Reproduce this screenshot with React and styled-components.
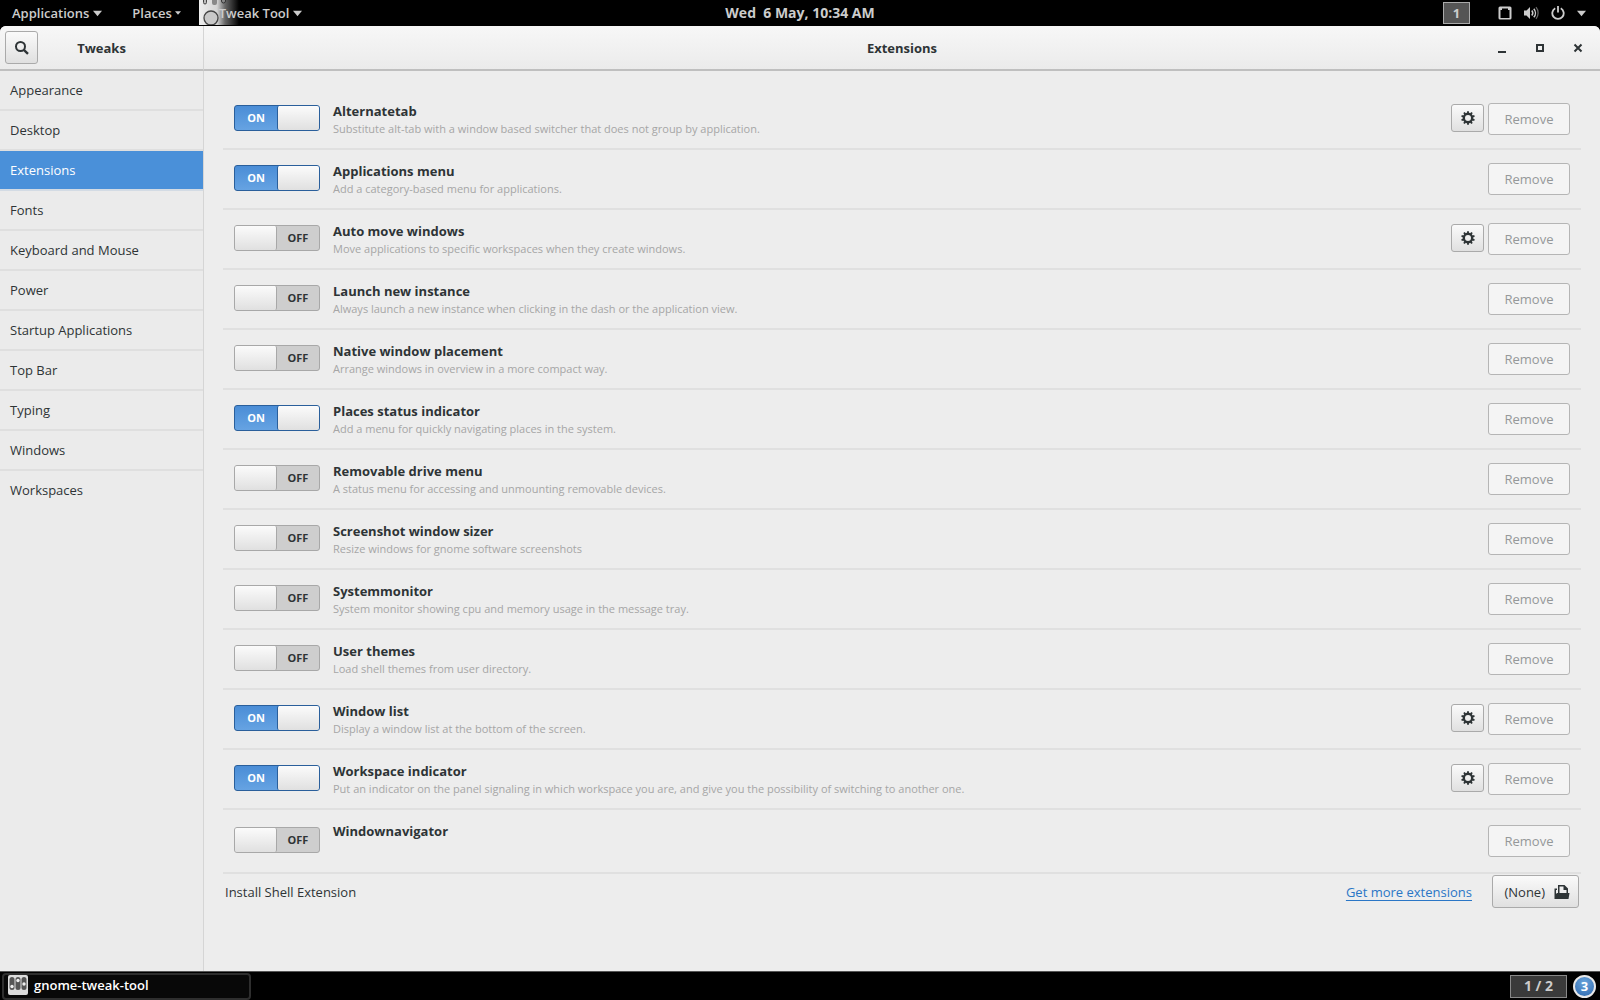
import React, { useState } from "react";
import styled, { createGlobalStyle, css } from "styled-components";

const Global = createGlobalStyle`
  * { box-sizing: border-box; }
  body { margin: 0; background: #000; }
  body, button, input { font-family: "Open Sans", "Noto Sans", sans-serif; font-size: 13px; }
`;

const Screen = styled.div`
  display: flex;
  flex-direction: column;
  min-height: 100vh;
  color: #2e3436;
  line-height: 18px;
`;

/* ---------- top panel ---------- */
const Panel = styled.header`
  display: grid;
  grid-template-columns: 1fr auto 1fr;
  align-items: center;
  height: 26px;
  background: #000;
  color: #ccc;
  font-weight: 700;
`;
const PanelSide = styled.div`
  display: flex;
  align-items: center;
  height: 26px;
  justify-content: ${(p) => (p.$end ? "flex-end" : "flex-start")};
`;
const PanelButton = styled.button`
  display: flex;
  align-items: center;
  gap: ${(p) => p.$gap || 4}px;
  height: 26px;
  padding: 0 ${(p) => p.$pad || 12}px;
  border: 0;
  background: none;
  color: inherit;
  font-weight: 600;
`;
const AppMenuButton = styled(PanelButton)`
  padding: 0 0 0 20px;
  position: relative;
  svg:first-child { position: absolute; left: 0; top: 0; }
  span { position: relative; }
`;
const Clock = styled.time`
  white-space: pre;
  font-size: 14px;
`;
const WorkspaceButton = styled.button`
  width: 27px;
  height: 22px;
  margin-right: 20px;
  padding: 0;
  border: 1px solid #aaa;
  background: #555;
  color: #ccc;
  font-weight: 700;
`;
const StatusButton = styled.button`
  display: flex;
  align-items: center;
  gap: 12px;
  height: 26px;
  padding: 0 14px 0 8px;
  border: 0;
  background: none;
  color: #ccc;
`;

/* ---------- window ---------- */
const Window = styled.main`
  flex: 1;
  display: grid;
  grid-template-columns: 204px 1fr;
  grid-template-rows: 45px 1fr;
  background: #ededed;
  border-radius: 6px 6px 0 0;
  overflow: hidden;
`;
const HeaderPart = styled.div`
  display: grid;
  grid-template-columns: 1fr auto 1fr;
  align-items: center;
  padding: 0 ${(p) => (p.$side ? 5 : 14)}px;
  background: linear-gradient(#f7f7f7, #ebebeb);
  border-bottom: 2px solid #bfbfbf;
  border-right: ${(p) => (p.$side ? "1px solid #d5d5d5" : "0")};
`;
const Title = styled.h1`
  grid-column: 2;
  margin: 0;
  font-size: 13px;
  font-weight: 700;
`;
const raised = css`
  border: 1px solid #aaa;
  border-radius: 3px;
  background: linear-gradient(#fafafa, #e0e0e0);
  color: #2e3436;
`;
const IconButton = styled.button`
  ${raised}
  display: flex;
  align-items: center;
  justify-content: center;
  width: 33px;
  height: 33px;
  padding: 0;
`;
const SettingsButton = styled(IconButton)`
  height: 28px;
  margin-bottom: 2px;
`;
const Controls = styled.div`
  display: flex;
  justify-content: flex-end;
  gap: 22px;
`;
const ControlButton = styled.button`
  display: flex;
  width: 16px;
  height: 16px;
  padding: 0;
  border: 0;
  background: none;
  color: #2e3436;
`;

const Sidebar = styled.nav`
  background: #ebebeb;
  border-right: 1px solid #d5d5d5;
`;
const SideItem = styled.button`
  display: block;
  width: 100%;
  height: 40px;
  padding: 0 10px;
  border: 0;
  border-bottom: 2px solid ${(p) => (p.$last ? "transparent" : p.$active ? "#d3dbe4" : "#dfdfdf")};
  text-align: left;
  background: ${(p) => (p.$active ? "#4a90d9" : "transparent")};
  color: ${(p) => (p.$active ? "#fff" : "#2e3436")};
`;

const Content = styled.section`
  padding: 19px 19px 24px;
`;
const List = styled.ul`
  margin: 0;
  padding: 0;
  list-style: none;
`;
const Row = styled.li`
  display: flex;
  align-items: center;
  gap: 4px;
  min-height: ${(p) => (p.$tall ? 64 : 60)}px;
  padding: 0 11px;
  border-bottom: 2px solid #e0e0e0;
`;
const SwitchLabel = styled.label`
  position: relative;
  display: grid;
  grid-template-columns: 1fr 1fr;
  flex: none;
  width: 86px;
  height: 26px;
  margin: 0 9px 2px 0;
  border: 1px solid ${(p) => (p.$on ? "#2a5f9b" : "#a8a8a8")};
  border-radius: 3px;
  background: ${(p) => (p.$on ? "linear-gradient(#4a8dd6, #66a3e2)" : "#cecece")};
  color: ${(p) => (p.$on ? "#fff" : "#2e3436")};
  font-size: 11px;
  font-weight: 700;
  line-height: 24px;
  text-align: center;
  input { position: absolute; inset: 0; margin: 0; opacity: 0; }
`;
const Knob = styled.span`
  order: ${(p) => (p.$on ? 2 : 0)};
  border-radius: 2px;
  background: linear-gradient(#fbfbfb, #e0e0e0);
  ${(p) => (p.$on ? "border-left: 1px solid #2a5f9b;" : "border-right: 1px solid #a8a8a8;")}
`;
const Texts = styled.div`
  flex: 1;
  align-self: flex-start;
  padding-top: 12px;
`;
const Name = styled.h2`
  margin: 0;
  font-size: 13px;
  line-height: 18px;
  font-weight: 700;
`;
const Description = styled.p`
  margin: 0;
  color: #a6a6a6;
  font-size: 11px;
  line-height: 18px;
`;
const RemoveButton = styled.button`
  width: 82px;
  height: 32px;
  padding: 0;
  border: 1px solid #b5b5b5;
  border-radius: 3px;
  background: #f4f4f4;
  color: #959899;
`;
const Footer = styled.div`
  display: flex;
  align-items: center;
  gap: 20px;
  padding: 1px 2px 0;
`;
const FooterLabel = styled.span`
  flex: 1;
`;
const Link = styled.a`
  color: #2a76c6;
  text-underline-offset: 3px;
`;
const FileButton = styled.button`
  ${raised}
  display: flex;
  align-items: center;
  justify-content: flex-end;
  gap: 9px;
  width: 87px;
  height: 33px;
  padding: 0 8px 0 0;
`;

/* ---------- window list ---------- */
const Taskbar = styled.footer`
  display: flex;
  align-items: center;
  gap: 6px;
  height: 29px;
  padding: 0 4px 0 2px;
  border-top: 1px solid #555;
  background: #000;
`;
const Task = styled.button`
  display: flex;
  align-items: center;
  gap: 6px;
  width: 249px;
  height: 27px;
  margin-right: auto;
  padding: 0 4px 2px;
  border: 2px solid #2e2e2e;
  border-radius: 4px;
  background: #080808;
  color: #fff;
  font-size: 13px;
  font-weight: 600;
`;
const Pager = styled.button`
  width: 57px;
  height: 23px;
  padding: 0;
  border: 1px solid #888;
  background: #3a3a3a;
  color: #ccc;
  font-size: 14px;
  font-weight: 700;
  line-height: 18px;
`;
const Badge = styled.button`
  width: 23px;
  height: 23px;
  padding: 0;
  border: 2px solid #e8e8e8;
  border-radius: 50%;
  background: radial-gradient(circle at 50% 30%, #6aa5dc, #2c66ad);
  color: #fff;
  font-size: 13px;
  font-weight: 700;
  line-height: 18px;
`;

/* ---------- drawings ---------- */
const Caret = ({ w = 9 }) => (
  <svg width={w} height={w} viewBox="0 0 10 10" aria-hidden="true">
    <path d="M0 2h10L5 8z" fill="currentColor" />
  </svg>
);
const SearchIcon = () => (
  <svg width="16" height="16" viewBox="0 0 16 16" fill="none" stroke="currentColor" aria-hidden="true">
    <circle cx="6.500" cy="6.500" r="4.500" strokeWidth="2" />
    <path d="M9.800 9.800l4.200 4" strokeWidth="2.400" />
  </svg>
);
const GearIcon = () => (
  <svg width="16" height="16" viewBox="0 0 16 16" fill="none" stroke="currentColor" aria-hidden="true">
    <circle cx="8" cy="8" r="4.200" strokeWidth="2.400" />
    {[0, 36, 72, 108, 144, 180, 216, 252, 288, 324].map((a) => (
      <path key={a} d="M8 1.200v2.400" strokeWidth="1.900" transform={`rotate(${a} 8 8)`} />
    ))}
  </svg>
);
const DocumentIcon = () => (
  <svg width="16" height="16" viewBox="0 0 16 16" aria-hidden="true">
    <path
      d="M0.500 4.500H3V6H2v4l1-1h1V1h6.500L14 4.500V9h1.500l-1 6H0.500zM5.500 2.500V9h7V6H9.500V2.500z"
      fillRule="evenodd"
      fill="currentColor"
    />
  </svg>
);
const SlidersIcon = () => (
  <svg width="20" height="20" viewBox="0 0 20 20" aria-hidden="true">
    <rect width="20" height="20" rx="2" fill="#dcdcdc" />
    <rect x="1.500" y="2" width="5" height="13" rx="2.500" fill="#555" />
    <rect x="7.500" y="2" width="5" height="13" rx="2.500" fill="#555" />
    <rect x="13.500" y="2" width="5" height="13" rx="2.500" fill="#555" />
    <circle cx="4" cy="11.500" r="1.700" fill="#eee" />
    <circle cx="10" cy="5.500" r="1.700" fill="#eee" />
    <circle cx="16" cy="9" r="1.700" fill="#eee" />
  </svg>
);
const FadedSliders = () => (
  <svg width="40" height="25" viewBox="0 0 40 25" aria-hidden="true">
    <defs>
      <linearGradient id="fade">
        <stop offset="0" stopColor="#eee" />
        <stop offset="0.45" stopColor="#d4d4d4" />
        <stop offset="0.65" stopColor="#666" />
        <stop offset="1" stopColor="#000" />
      </linearGradient>
    </defs>
    <rect width="40" height="25" fill="url(#fade)" />
    <rect x="4.500" y="-4" width="3" height="8" rx="1.500" fill="#bbb" stroke="#444" />
    <rect x="13" y="-4" width="5" height="9" rx="2" fill="#888" />
    <rect x="22.500" y="-4" width="4" height="7" rx="2" fill="#888" stroke="#333" />
    <circle cx="12" cy="18" r="7" fill="#c8c8c8" stroke="#444" strokeWidth="1.300" />
  </svg>
);
const NetworkIcon = () => (
  <svg width="14" height="14" viewBox="0 0 14 14" aria-hidden="true">
    <path
      fillRule="evenodd"
      fill="currentColor"
      d="M2 0.500h10a1.500 1.500 0 0 1 1.500 1.500v10a1.500 1.500 0 0 1-1.500 1.500H2A1.500 1.500 0 0 1 .500 12V2A1.500 1.500 0 0 1 2 .500zM4 2.500v1.500h-1.500v8h9V4H10V2.500z"
    />
  </svg>
);
const VolumeIcon = () => (
  <svg width="15" height="14" viewBox="0 0 15 14" fill="none" stroke="currentColor" aria-hidden="true">
    <path d="M0 4.500h2.500L6 1v12L2.500 9.500H0z" fill="currentColor" stroke="none" />
    <path d="M7.800 4.500a4 4 0 0 1 0 5M9.800 2.700a6.500 6.500 0 0 1 0 8.600" strokeWidth="1.500" />
    <path d="M12 1.200a9 9 0 0 1 0 11.600" strokeWidth="1.300" opacity=".5" />
  </svg>
);
const PowerIcon = () => (
  <svg width="14" height="14" viewBox="0 0 14 14" fill="none" stroke="currentColor" strokeWidth="1.800" aria-hidden="true">
    <path d="M4.200 2.300a5.700 5.700 0 1 0 5.600 0M7 0v6.500" />
  </svg>
);

const sections = ["Appearance", "Desktop", "Extensions", "Fonts", "Keyboard and Mouse", "Power", "Startup Applications", "Top Bar", "Typing", "Windows", "Workspaces"];

const initial = [
  { name: "Alternatetab", text: "Substitute alt-tab with a window based switcher that does not group by application.", on: true, gear: true },
  { name: "Applications menu", text: "Add a category-based menu for applications.", on: true },
  { name: "Auto move windows", text: "Move applications to specific workspaces when they create windows.", gear: true },
  { name: "Launch new instance", text: "Always launch a new instance when clicking in the dash or the application view." },
  { name: "Native window placement", text: "Arrange windows in overview in a more compact way." },
  { name: "Places status indicator", text: "Add a menu for quickly navigating places in the system.", on: true },
  { name: "Removable drive menu", text: "A status menu for accessing and unmounting removable devices." },
  { name: "Screenshot window sizer", text: "Resize windows for gnome software screenshots" },
  { name: "Systemmonitor", text: "System monitor showing cpu and memory usage in the message tray." },
  { name: "User themes", text: "Load shell themes from user directory." },
  { name: "Window list", text: "Display a window list at the bottom of the screen.", on: true, gear: true },
  { name: "Workspace indicator", text: "Put an indicator on the panel signaling in which workspace you are, and give you the possibility of switching to another one.", on: true, gear: true },
  { name: "Windownavigator", text: "", tall: true },
];

function Switch({ on, name, onChange }) {
  return (
    <SwitchLabel $on={on}>
      <input type="checkbox" role="switch" aria-label={name} checked={on} onChange={onChange} />
      <Knob $on={on} />
      <span>{on ? "ON" : "OFF"}</span>
    </SwitchLabel>
  );
}

export default function App() {
  const [items, setItems] = useState(initial);
  const [section, setSection] = useState("Extensions");
  const toggle = (name) => setItems(items.map((i) => (i.name === name ? { ...i, on: !i.on } : i)));

  return (
    <Screen>
      <Global />
      <Panel>
        <PanelSide>
          <PanelButton>Applications <Caret /></PanelButton>
          <PanelButton $pad={18} $gap={3}>Places <Caret w={6} /></PanelButton>
          <AppMenuButton><FadedSliders /><span>Tweak Tool</span> <Caret /></AppMenuButton>
        </PanelSide>
        <Clock>{"Wed  6 May, 10:34 AM"}</Clock>
        <PanelSide $end>
          <WorkspaceButton>1</WorkspaceButton>
          <StatusButton aria-label="System menu">
            <NetworkIcon /><VolumeIcon /><PowerIcon /><Caret />
          </StatusButton>
        </PanelSide>
      </Panel>

      <Window>
        <HeaderPart $side>
          <IconButton aria-label="Search"><SearchIcon /></IconButton>
          <Title as="h2">Tweaks</Title>
        </HeaderPart>
        <HeaderPart>
          <Title>{section}</Title>
          <Controls>
            <ControlButton aria-label="Minimize">
              <svg width="16" height="16"><path d="M4 11h8v2H4z" fill="currentColor" /></svg>
            </ControlButton>
            <ControlButton aria-label="Maximize">
              <svg width="16" height="16"><path d="M5 5h6v6H5z" fill="none" stroke="currentColor" strokeWidth="2" /></svg>
            </ControlButton>
            <ControlButton aria-label="Close">
              <svg width="16" height="16"><path d="M4.500 4.500l7 7M11.500 4.500l-7 7" stroke="currentColor" strokeWidth="2" /></svg>
            </ControlButton>
          </Controls>
        </HeaderPart>
        <Sidebar>
          {sections.map((s, i) => (
            <SideItem key={s} $active={s === section} $last={i === sections.length - 1} onClick={() => setSection(s)}>{s}</SideItem>
          ))}
        </Sidebar>
        <Content>
          <List>
            {items.map((i) => (
              <Row key={i.name} $tall={i.tall}>
                <Switch on={!!i.on} name={i.name} onChange={() => toggle(i.name)} />
                <Texts>
                  <Name>{i.name}</Name>
                  {i.text && <Description>{i.text}</Description>}
                </Texts>
                {i.gear && <SettingsButton aria-label={`${i.name} settings`}><GearIcon /></SettingsButton>}
                <RemoveButton disabled>Remove</RemoveButton>
              </Row>
            ))}
          </List>
          <Footer>
            <FooterLabel>Install Shell Extension</FooterLabel>
            <Link href="#extensions">Get more extensions</Link>
            <FileButton>(None) <DocumentIcon /></FileButton>
          </Footer>
        </Content>
      </Window>

      <Taskbar>
        <Task><SlidersIcon /> gnome-tweak-tool</Task>
        <Pager>1 / 2</Pager>
        <Badge>3</Badge>
      </Taskbar>
    </Screen>
  );
}
